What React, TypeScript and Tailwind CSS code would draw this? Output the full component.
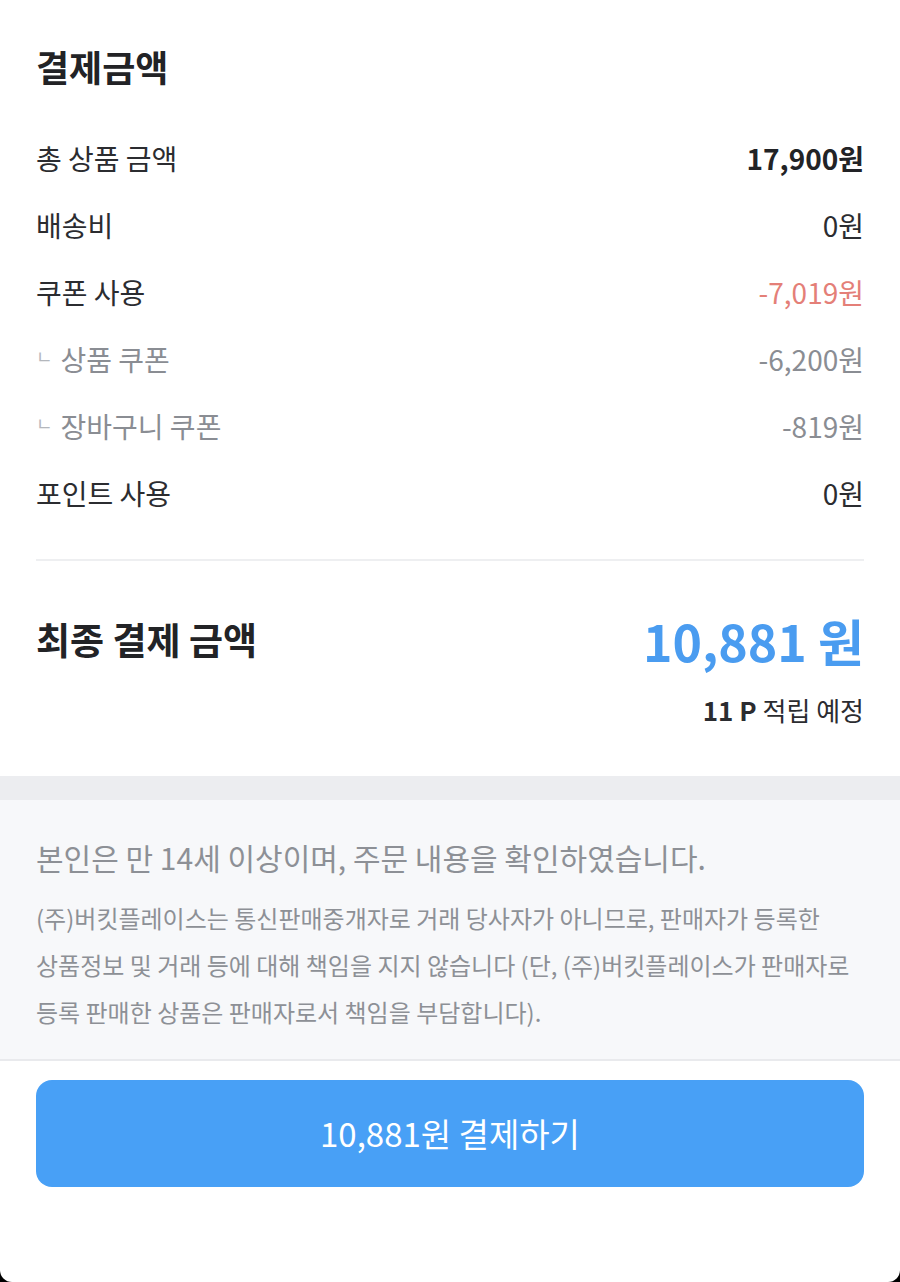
const font = '"Noto Sans CJK KR", "Noto Sans", sans-serif';

type Line = { label: string; value: string; sub?: boolean; tone?: 'bold' | 'red' | 'gray' | 'plain' };

const lines: Line[] = [
  { label: '총 상품 금액', value: '17,900원', tone: 'bold' },
  { label: '배송비', value: '0원' },
  { label: '쿠폰 사용', value: '-7,019원', tone: 'red' },
  { label: '상품 쿠폰', value: '-6,200원', sub: true, tone: 'gray' },
  { label: '장바구니 쿠폰', value: '-819원', sub: true, tone: 'gray' },
  { label: '포인트 사용', value: '0원' },
];

function Row({ line }: { line: Line }) {
  const valueClass =
    line.tone === 'bold'
      ? 'font-bold text-[#222326]'
      : line.tone === 'red'
        ? 'text-[#e47f78]'
        : line.tone === 'gray'
          ? 'text-[#8a8d93]'
          : 'text-[#2b2c30]';
  return (
    <div className="h-[67px] flex items-center justify-between text-[28px]">
      <div className={line.sub ? 'flex items-center text-[#8a8d93]' : 'flex items-center text-[#2b2c30]'}>
        {line.sub && <span className="text-[18px] text-[#b4b7bc] mr-[8px] -mt-[4px]">ㄴ</span>}
        <span>{line.label}</span>
      </div>
      <span className={valueClass}>{line.value}</span>
    </div>
  );
}

export default function App() {
  return (
    <div className="h-[1282px] bg-black" style={{ fontFamily: font }}>
      <div className="h-full bg-white rounded-b-[12px] flex flex-col overflow-hidden">
        <div className="px-[36px] pt-[36px] pb-[51px]">
          <h1 className="text-[36px] leading-[60px] font-bold text-[#222326]">결제금액</h1>
          <div className="mt-[28px]">
            {lines.map((l) => (
              <Row key={l.label} line={l} />
            ))}
          </div>
          <div className="mt-[33px] h-[2px] bg-[#eeeff1]" />
          <div className="mt-[39px] h-[80px] flex items-center justify-between">
            <span className="text-[37px] font-bold text-[#222326]">최종 결제 금액</span>
            <span className="text-[50px] font-semibold text-[#4a9cf0] leading-none">10,881 원</span>
          </div>
          <div className="mt-[15px] leading-[30px] text-right text-[26px] text-[#2b2c30]">
            <span className="font-bold">11 P</span> 적립 예정
          </div>
        </div>
        <div className="h-[24px] bg-[#ecedf0]" />
        <div className="bg-[#f7f8fa] px-[36px] pt-[37px] pb-[24px] border-b-2 border-[#e9eaed]">
          <p className="text-[30px] leading-[40px] text-[#8d9096] whitespace-nowrap">본인은 만 14세 이상이며, 주문 내용을 확인하였습니다.</p>
          <p className="mt-[17px] text-[24px] leading-[47px] text-[#8d9096] whitespace-nowrap">
            (주)버킷플레이스는 통신판매중개자로 거래 당사자가 아니므로, 판매자가 등록한
            <br />
            상품정보 및 거래 등에 대해 책임을 지지 않습니다 (단, (주)버킷플레이스가 판매자로
            <br />
            등록 판매한 상품은 판매자로서 책임을 부담합니다).
          </p>
        </div>
        <div className="px-[36px] pt-[19px]">
          <button className="w-full h-[107px] rounded-[16px] bg-[#48a0f6] text-white text-[33px] flex items-center justify-center">
            10,881원 결제하기
          </button>
        </div>
      </div>
    </div>
  );
}
